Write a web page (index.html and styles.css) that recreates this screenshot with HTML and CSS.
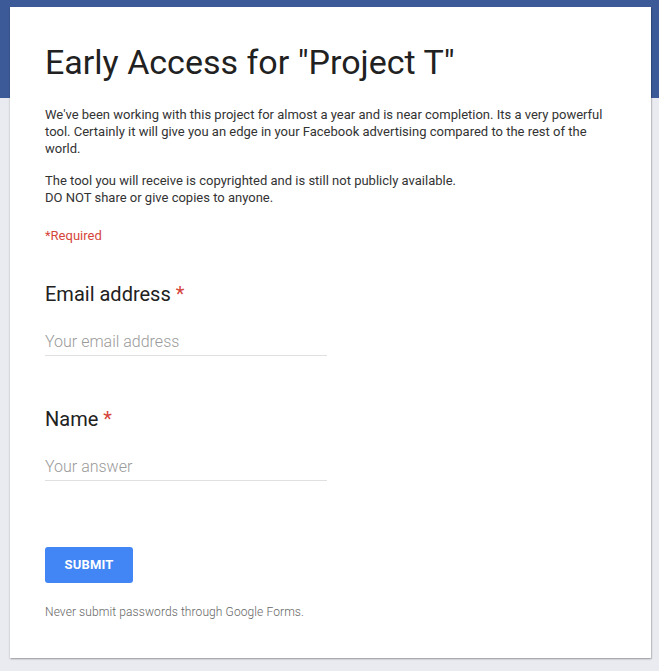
FILE: index.html
```html
<!DOCTYPE html>
<html>
<head>
<meta charset="utf-8">
<link rel="stylesheet" href="styles.css">
</head>
<body>
<div class="band"></div>
<div class="page">
  <div class="card">
    <h1 class="title">Early Access for "Project T"</h1>
    <p class="desc">We've been working with this project for almost a year and is near completion. Its a very powerful tool. Certainly it will give you an edge in your Facebook advertising compared to the rest of the world.</p>
    <p class="desc second">The tool you will receive is copyrighted and is still not publicly available.<br>DO NOT share or give copies to anyone.</p>
    <div class="required">*Required</div>

    <div class="question first">
      <div class="label">Email address <span class="star">*</span></div>
      <div class="input">Your email address</div>
    </div>
    <div class="question">
      <div class="label">Name <span class="star">*</span></div>
      <div class="input">Your answer</div>
    </div>

    <button class="submit">SUBMIT</button>
    <div class="note">Never submit passwords through Google Forms.</div>
  </div>
</div>
</body>
</html>
```

FILE: styles.css
```css
html, body {
  margin: 0;
  padding: 0;
}
body {
  background: #e9ebf1;
  font-family: Roboto, "Liberation Sans", sans-serif;
  position: relative;
  min-height: 671px;
}
.band {
  position: absolute;
  left: 0;
  top: 0;
  width: 100%;
  height: 98px;
  background: #3d5a98;
}
.page {
  position: relative;
  padding: 7px 8px 0 10px;
}
.card {
  background: #fff;
  width: 641px;
  box-sizing: border-box;
  height: 651px;
  padding: 35px 35px 0 35px;
  box-shadow: 0 1px 2px rgba(0,0,0,0.25), 1px 1px 1px rgba(0,0,0,0.12);
}
.title {
  margin: 0;
  font-weight: 400;
  font-size: 34px;
  line-height: 40px;
  color: #212121;
}
.desc {
  margin: 24px 0 0 0;
  font-size: 13px;
  line-height: 17px;
  color: #333;
}
.desc.second {
  margin-top: 15px;
}
.required {
  margin-top: 21px;
  font-size: 13px;
  line-height: 17px;
  color: #d5453b;
}
.question {
  margin-top: 51px;
}
.question.first {
  margin-top: 38px;
}
.label {
  font-size: 20px;
  line-height: 24px;
  color: #212121;
}
.star {
  color: #d5453b;
}
.input {
  margin-top: 26px;
  width: 282px;
  font-size: 16px;
  font-weight: 300;
  line-height: 20px;
  color: #9a9a9a;
  border-bottom: 1px solid #e0e0e0;
  padding-bottom: 3px;
}
.submit {
  display: block;
  margin-top: 66px;
  width: 88px;
  height: 36px;
  border: none;
  border-radius: 3px;
  background: #4285f4;
  color: #fff;
  font-family: Roboto, "Liberation Sans", sans-serif;
  font-weight: 700;
  font-size: 13px;
  letter-spacing: 0.2px;
  line-height: 34px;
  padding: 0;
}
.note {
  margin-top: 22px;
  font-size: 12px;
  font-weight: 300;
  letter-spacing: 0.1px;
  line-height: 14px;
  color: #666;
}
```
